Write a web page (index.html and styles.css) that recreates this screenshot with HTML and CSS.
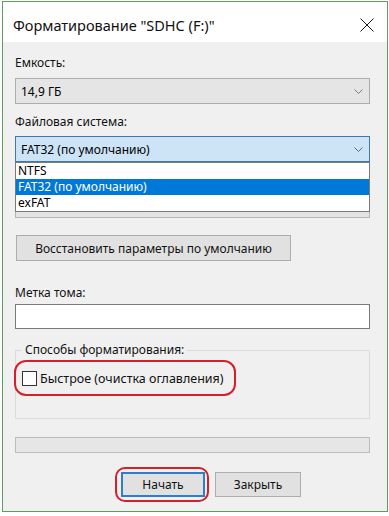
FILE: index.html
```html
<!DOCTYPE html>
<html lang="ru">

<head>
  <meta charset="UTF-8" />
  <meta name="viewport" content="width=device-width, initial-scale=1.0" />
  <title>Форматирование</title>
  <link rel="stylesheet" href="styles.css">
</head>

<body>
  <div class="janela">
    <div class="barra-titulo">
      <span class="titulo">Форматирование "SDHC (F:)"</span>
      <svg class="fechar" width="14" height="14" viewBox="0 0 14 14">
        <path d="M0.5 0.5 L13.5 13.5 M13.5 0.5 L0.5 13.5" stroke="#1a1a1a" stroke-width="1" fill="none" />
      </svg>
    </div>

    <div class="conteudo">
      <div class="rotulo">Емкость:</div>
      <div class="combo">
        <span>14,9 ГБ</span>
        <svg class="seta" width="9" height="5" viewBox="0 0 9 5">
          <path d="M0.5 0.5 L4.5 4.5 L8.5 0.5" stroke="#7a7a7a" fill="none" />
        </svg>
      </div>

      <div class="rotulo rotulo-sistema">Файловая система:</div>
      <div class="combo combo-ativo">
        <span>FAT32 (по умолчанию)</span>
        <svg class="seta" width="9" height="5" viewBox="0 0 9 5">
          <path d="M0.5 0.5 L4.5 4.5 L8.5 0.5" stroke="#5a6a7a" fill="none" />
        </svg>
      </div>
      <ul class="lista">
        <li>NTFS</li>
        <li class="selecionado">FAT32 (по умолчанию)</li>
        <li>exFAT</li>
      </ul>
      <div class="combo-oculto"></div>

      <button class="btn btn-restaurar">Восстановить параметры по умолчанию</button>

      <div class="rotulo rotulo-volume">Метка тома:</div>
      <div class="campo"></div>

      <fieldset class="grupo">
        <legend>Способы форматирования:</legend>
        <label class="opcao destaque">
          <span class="caixa"></span>
          Быстрое (очистка оглавления)
        </label>
      </fieldset>

      <div class="progresso"></div>

      <div class="acoes">
        <button class="btn btn-principal destaque">Начать</button>
        <button class="btn">Закрыть</button>
      </div>
    </div>
  </div>
</body>

</html>
```

FILE: styles.css
```css
body {
  margin: 0;
  font-family: "Noto Sans", "Open Sans", sans-serif;
  font-size: 12px;
  color: #000;
  background-color: #fff;
}

.janela {
  width: 386px;
  height: 511px;
  margin: 1px 0 0 2px;
  box-sizing: border-box;
  border: 1px solid #5aa05a;
  background-color: #f0f0f0;
}

.barra-titulo {
  height: 40px;
  background-color: #fff;
  display: flex;
  align-items: center;
  justify-content: space-between;
  padding: 6px 13px 0 10px;
  box-sizing: border-box;
}

.titulo {
  font-size: 14.5px;
  color: #111;
}

.conteudo {
  padding: 13px 17px 0 12px;
}

.rotulo {
  line-height: 16px;
  height: 16px;
  color: #111;
}

.combo {
  height: 26px;
  margin-top: 7px;
  box-sizing: border-box;
  border: 1px solid #adadad;
  background-color: #e5e5e5;
  display: flex;
  align-items: center;
  justify-content: space-between;
  padding: 0 6px 0 5px;
}

.rotulo-sistema {
  margin-top: 10px;
}

.combo-ativo {
  margin-top: 6px;
  background-color: #cde4f7;
  border-color: #3c78b4;
}

/* lista aberta do combo */
.lista {
  list-style: none;
  margin: 0;
  padding: 0;
  background-color: #fff;
  border: 1px solid #7a7a7a;
}

.lista li {
  height: 16px;
  line-height: 16px;
  padding-left: 2px;
}

.lista .selecionado {
  background-color: #0078d7;
  color: #fff;
}

.combo-oculto {
  height: 5px;
  background-color: #e3e3e3;
  border: 1px solid #b5b5b5;
  border-top: none;
}

.btn {
  height: 26px;
  box-sizing: border-box;
  border: 1px solid #adadad;
  background-color: #e1e1e1;
  font-family: "Noto Sans", "Open Sans", sans-serif;
  font-size: 12px;
  color: #111;
  padding: 0;
  cursor: pointer;
}

.btn-restaurar {
  display: block;
  width: 275px;
  margin: 17px 0 0 1px;
}

.rotulo-volume {
  margin-top: 24px;
}

.campo {
  height: 25px;
  margin-top: 3px;
  box-sizing: border-box;
  border: 1px solid #7a7a7a;
  background-color: #fff;
}

.grupo {
  margin: 13px 0 0 0;
  padding: 0 0 22px 0;
  border: 1px solid #dcdcdc;
}

.grupo legend {
  margin-left: 6px;
  padding: 0 3px;
  line-height: 16px;
  color: #111;
}

.opcao {
  display: inline-flex;
  align-items: center;
  height: 36px;
  margin-top: 2px;
  margin-left: -2px;
  padding: 0 12px 0 8px;
  box-sizing: border-box;
  color: #111;
  font-size: 12.5px;
}

.caixa {
  width: 15px;
  height: 15px;
  box-sizing: border-box;
  border: 1px solid #333;
  background-color: #fff;
  margin-right: 3px;
}

/* marcações vermelhas do print */
.destaque {
  position: relative;
}

.destaque::after {
  content: "";
  position: absolute;
  inset: 0;
  border: 2.5px solid #d42029;
  border-radius: 12px;
  pointer-events: none;
}

.btn-principal.destaque::after {
  inset: -7px -6px -7px -8px;
  border-radius: 10px;
}

.progresso {
  height: 16px;
  margin-top: 18px;
  box-sizing: border-box;
  border: 1px solid #bcbcbc;
  background-color: #e6e6e6;
}

.acoes {
  display: flex;
  gap: 10px;
  margin: 19px 0 0 106px;
}

.acoes .btn {
  width: 86px;
  height: 25px;
}

.acoes .btn-principal {
  width: 84px;
  border: 2px solid #2a7fcf;
}
```
